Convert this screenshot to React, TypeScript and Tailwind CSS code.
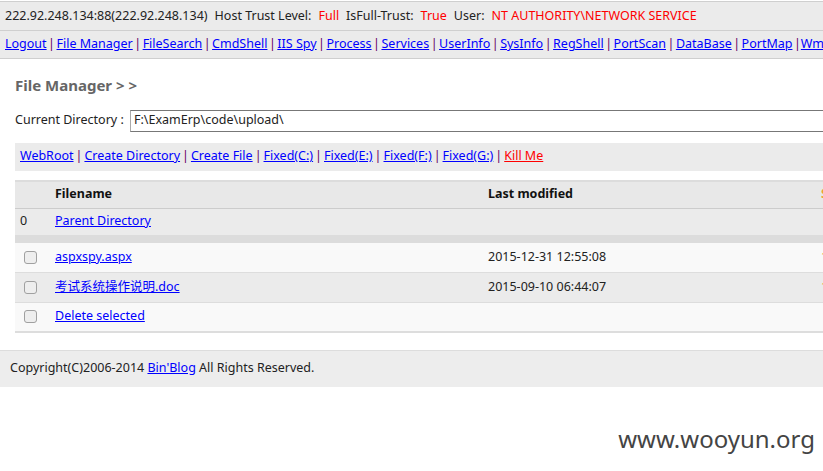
import React from 'react';

const navLinks = [
  'Logout', 'File Manager', 'FileSearch', 'CmdShell', 'IIS Spy', 'Process', 'Services',
  'UserInfo', 'SysInfo', 'RegShell', 'PortScan', 'DataBase', 'PortMap',
];

const toolLinks = ['WebRoot', 'Create Directory', 'Create File', 'Fixed(C:)', 'Fixed(E:)', 'Fixed(F:)', 'Fixed(G:)'];

function Checkbox() {
  return <span className="inline-block w-[13px] h-[13px] rounded-[3px] border border-[#a0a0a0] bg-[#eeeeee]" />;
}

function Sep({ wide }: { wide?: boolean }) {
  return <span className={wide ? 'text-[#660066] mx-[2px]' : 'text-[#660066] mx-[1.5px]'}>|</span>;
}

export default function App() {
  return (
    <div
      className="w-[823px] h-[471px] overflow-hidden bg-white text-[12.5px] text-[#222]"
      style={{ fontFamily: '"Noto Sans", "Noto Sans CJK SC", sans-serif' }}
    >
      <div className="w-[1100px]">
        {/* host info */}
        <div className="mt-[1px] h-[30px] border-t border-b border-[#cfcfcf] bg-[#ebebeb] px-[5px] flex items-center whitespace-nowrap">
          <span>222.92.248.134:88(222.92.248.134)</span>
          <span className="ml-[7px]">Host Trust Level:</span>
          <span className="ml-[7px] text-[#ff0000]">Full</span>
          <span className="ml-[7px]">IsFull-Trust:</span>
          <span className="ml-[7px] text-[#ff0000]">True</span>
          <span className="ml-[7px]">User:</span>
          <span className="ml-[7px] text-[#ff0000]">NT AUTHORITY\NETWORK SERVICE</span>
        </div>

        {/* nav */}
        <div className="h-[28px] border-b border-[#cfcfcf] bg-[#ebebeb] px-[5px] flex items-center whitespace-nowrap">
          {navLinks.map((l, i) => (
            <React.Fragment key={l}>
              {i > 0 && <Sep />}
              <a className="text-[#0000ff] underline">{l}</a>
            </React.Fragment>
          ))}
          <span className="text-[#660066] ml-[1.5px]">|</span>
          <a className="text-[#0000ff] underline">WmiTools</a>
        </div>

        <div className="pl-[15px]">
          <div className="pt-[15px] text-[15px] font-bold text-[#666]">File Manager &gt; &gt;</div>

          <div className="mt-[13px] flex items-center h-[22px]">
            <span className="w-[115px]">Current Directory :</span>
            <div className="h-[22px] w-[900px] border border-[#777] border-l-[#aaa] flex items-center pl-[3px]">
              F:\ExamErp\code\upload\
            </div>
          </div>

          <div className="mt-[11px] h-[28px] bg-[#ebebeb] px-[5px] flex items-center whitespace-nowrap">
            {toolLinks.map((l, i) => (
              <React.Fragment key={l}>
                {i > 0 && <Sep wide />}
                <a className="text-[#0000ff] underline">{l}</a>
              </React.Fragment>
            ))}
            <Sep wide />
            <a className="text-[#ff0000] underline">Kill Me</a>
          </div>

          {/* file table */}
          <div className="mt-[9px] border-t-2 border-[#dcdcdc]">
            <div className="h-[27px] bg-[#e8e8e8] border-b border-[#cccccc] flex items-center font-bold text-[#111]">
              <span className="w-[40px]" />
              <span className="w-[433px]">Filename</span>
              <span className="w-[333px]">Last modified</span>
              <span className="text-[#f0a030]">Size</span>
            </div>
            <div className="h-[26px] bg-[#ebebeb] flex items-center">
              <span className="w-[40px] pl-[5px]">0</span>
              <a className="text-[#0000ff] underline">Parent Directory</a>
            </div>
            <div className="h-[8px] bg-[#dcdcdc]" />
            <div className="h-[30px] bg-[#f9f9f9] border-b border-[#dddddd] flex items-center">
              <span className="w-[40px] pl-[9px] flex items-center"><Checkbox /></span>
              <a className="w-[433px] text-[#0000ff] underline">aspxspy.aspx</a>
              <span className="w-[333px]">2015-12-31 12:55:08</span>
              <span className="text-[#f0a030]">1.2 M</span>
            </div>
            <div className="h-[30px] bg-[#ebebeb] border-b border-[#dddddd] flex items-center">
              <span className="w-[40px] pl-[9px] flex items-center"><Checkbox /></span>
              <span className="w-[433px]"><a className="text-[#0000ff] underline">考试系统操作说明.doc</a></span>
              <span className="w-[333px]">2015-09-10 06:44:07</span>
              <span className="text-[#f0a030]">1.0 M</span>
            </div>
            <div className="h-[30px] bg-[#f9f9f9] border-b-2 border-[#dddddd] flex items-center">
              <span className="w-[40px] pl-[9px] flex items-center"><Checkbox /></span>
              <a className="text-[#0000ff] underline">Delete selected</a>
            </div>
          </div>
        </div>

        {/* footer */}
        <div className="mt-[17px] h-[37px] border-t border-[#dddddd] bg-[#ededed] pl-[10px] flex items-center whitespace-nowrap">
          Copyright(C)2006-2014&nbsp;<a className="text-[#0000ff] underline">Bin'Blog</a>&nbsp;All Rights Reserved.
        </div>

        <div className="w-[823px] mt-[34px] pr-[8px] text-right text-[24px] text-[#444]">www.wooyun.org</div>
      </div>
    </div>
  );
}
